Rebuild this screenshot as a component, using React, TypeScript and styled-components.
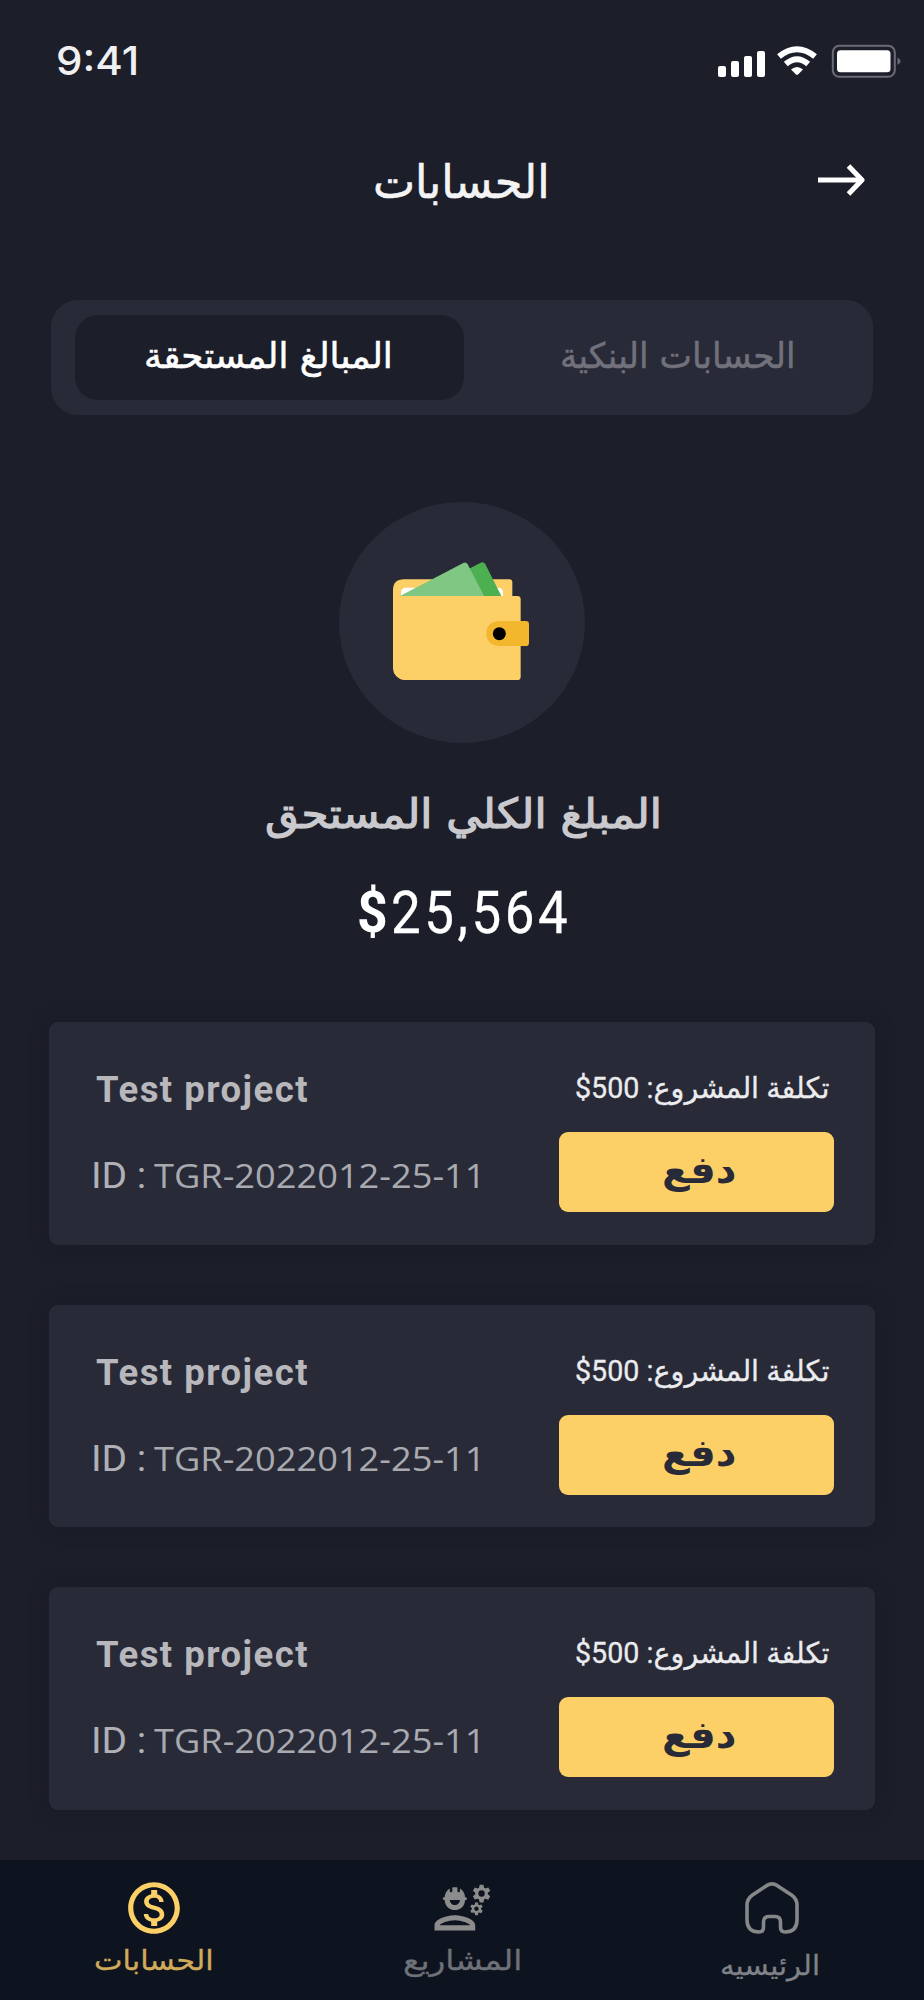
import React, { useLayoutEffect, useRef, useState } from "react";
import styled, { createGlobalStyle } from "styled-components";
import { MdOutlineEngineering, MdOutlineMonetizationOn } from "react-icons/md";

const arabic = '"DejaVu Sans", sans-serif';
const latin = 'Roboto, "Liberation Sans", sans-serif';

const GlobalStyle = createGlobalStyle`
  * { box-sizing: border-box; }
  body { margin: 0; background: #1c1e2a; }
`;

const Screen = styled.div`
  width: 924px;
  height: 2000px;
  display: flex;
  flex-direction: column;
  background: #1c1e2a;
  color: #fff;
  font-family: ${arabic};
  overflow: hidden;
`;

type FitStyle = {
  $w: number;
  $size: number;
  $weight?: number;
  $color?: string;
  $font?: string;
  $stroke?: number;
  $spacing?: number;
};

const FitBox = styled.span<FitStyle>`
  display: flex;
  flex: none;
  width: ${(p) => p.$w}px;
  height: 40px;
  line-height: 40px;
  font-family: ${(p) => p.$font ?? arabic};
  font-size: ${(p) => p.$size}px;
  font-weight: ${(p) => p.$weight ?? 400};
  color: ${(p) => p.$color ?? "#fff"};
  letter-spacing: ${(p) => (p.$spacing ? `${p.$spacing}px` : "normal")};
  -webkit-text-stroke: ${(p) => p.$stroke ?? 0}px currentColor;
`;

const FitInner = styled.span`
  flex: none;
  white-space: nowrap;
  transform-origin: 0 50%;
`;

type FitProps = {
  width: number;
  size: number;
  weight?: number;
  color?: string;
  font?: string;
  stroke?: number;
  spacing?: number;
  rtl?: boolean;
  children: React.ReactNode;
};

/* A single line of text condensed or widened to an exact width. */
function Fit({ width, size, weight, color, font, stroke, spacing, rtl, children }: FitProps) {
  const ref = useRef<HTMLSpanElement>(null);
  const [scale, setScale] = useState(1);
  useLayoutEffect(() => {
    if (ref.current) setScale(width / ref.current.offsetWidth);
  }, [width, size]);
  return (
    <FitBox
      $w={width}
      $size={size}
      $weight={weight}
      $color={color}
      $font={font}
      $stroke={stroke}
      $spacing={spacing}
    >
      <FitInner ref={ref} dir={rtl ? "rtl" : "ltr"} style={{ transform: `scaleX(${scale})` }}>
        {children}
      </FitInner>
    </FitBox>
  );
}

const StatusBar = styled.header`
  height: 122px;
  flex: none;
  display: flex;
  align-items: center;
  justify-content: space-between;
  padding: 0 23px 0 56px;
`;

const TitleBar = styled.div`
  height: 120px;
  flex: none;
  display: grid;
  grid-template-columns: 1fr auto 1fr;
  align-items: center;
  padding: 0 59px 0 57px;
`;

const BackButton = styled.button`
  grid-column: 3;
  justify-self: end;
  display: flex;
  padding: 0 0 4px;
  border: 0;
  background: none;
`;

const TitleSlot = styled.h1`
  grid-column: 2;
  margin: 0;
`;

const Tabs = styled.div`
  flex: none;
  display: flex;
  height: 115px;
  margin: 58px 51px 0;
  padding: 15px 24px;
  border-radius: 27px;
  background: #282a38;
`;

const Tab = styled.button<{ $active?: boolean }>`
  display: flex;
  align-items: center;
  justify-content: center;
  flex: ${(p) => (p.$active ? "0 0 389px" : "1")};
  padding: ${(p) => (p.$active ? "0 2px 3px 0" : "0 0 3px 42px")};
  border: 0;
  border-radius: 23px;
  background: ${(p) => (p.$active ? "#1c1e2a" : "transparent")};
`;

const WalletDisc = styled.div`
  flex: none;
  align-self: center;
  display: flex;
  align-items: center;
  justify-content: center;
  width: 246px;
  height: 241px;
  margin-top: 87px;
  padding: 0 2px 4px 0;
  border-radius: 50%;
  background: #282a38;
`;

const Summary = styled.section`
  flex: none;
  display: flex;
  flex-direction: column;
  align-items: center;
  margin-top: 51px;
  padding-left: 2px;
  gap: 59px;
`;

const Amount = styled.div`
  display: flex;
  gap: 3px;
  padding-left: 1px;
`;

const CardList = styled.main`
  flex: 1;
  display: flex;
  flex-direction: column;
  gap: 60px;
  padding: 89px 49px 0;
`;

const Card = styled.article`
  display: flex;
  flex: none;
  justify-content: space-between;
  height: 222.5px;
  padding: 0 41px 0 42px;
  border-radius: 9px;
  background: #282a38;
  box-shadow: 0 0 20px rgba(20, 20, 26, 0.25);
`;

const ProjectInfo = styled.div`
  display: flex;
  flex-direction: column;
  gap: 45px;
  padding-top: 48px;
`;

const ProjectName = styled.div`
  padding-left: 5px;
`;

const ProjectId = styled.div`
  display: flex;
  gap: 8px;
`;

const Payment = styled.div`
  width: 275px;
  display: flex;
  flex-direction: column;
  align-items: flex-end;
  padding-top: 46px;
  gap: 24px;
`;

const Cost = styled.div`
  padding-right: 5px;
`;

const PayButton = styled.button`
  width: 275px;
  height: 80px;
  display: flex;
  align-items: center;
  justify-content: center;
  padding: 0 0 4px 4px;
  border: 0;
  border-radius: 9px;
  background: #fdcf67;
`;

const NavBar = styled.nav`
  flex: none;
  display: grid;
  grid-template-columns: repeat(3, 1fr);
  height: 140px;
  background: #0e141f;
`;

const NavItem = styled.a<{ $gap: number; $color: string }>`
  display: flex;
  flex-direction: column;
  align-items: center;
  gap: ${(p) => p.$gap}px;
  padding-top: 17px;
  color: ${(p) => p.$color};
`;

const IconSlot = styled.span<{ $inset?: number }>`
  display: flex;
  align-items: center;
  justify-content: center;
  height: 61px;
  padding-left: ${(p) => p.$inset ?? 0}px;
`;

function StatusIcons() {
  return (
    <svg width="184" height="34" viewBox="0 0 184 34" fill="#fff">
      <rect x="1" y="22" width="8" height="11" rx="2" />
      <rect x="14" y="17" width="8" height="16" rx="2" />
      <rect x="27" y="12" width="8" height="21" rx="2" />
      <rect x="40" y="7" width="8" height="26" rx="2" />
      <g fill="none" stroke="#fff" strokeWidth="6">
        <path d="M62 12.5 Q80 -2 98 12.5" />
        <path d="M68.8 20 Q80 10.5 91.2 20" />
      </g>
      <path d="M74 25.5 Q80 20.5 86 25.5 L81 30.5 Q80 31.3 79 30.5 Z" />
      <rect x="115.800" y="1.800" width="62" height="31" rx="6.500" fill="none" stroke="#6a6b75" strokeWidth="2" />
      <rect x="120" y="6.300" width="53.500" height="22" rx="3.500" />
      <path d="M180.5 13.5 Q183.5 15 183.5 17.3 Q183.5 19.5 180.5 21 Z" fill="#6a6b75" />
    </svg>
  );
}

function ArrowRight() {
  return (
    <svg width="48" height="32" viewBox="0 0 48 32" fill="none" stroke="#fff" strokeWidth="5">
      <path d="M1 16 H45" />
      <path d="M31.500 2 L45 16 L31.500 30" strokeLinejoin="round" />
    </svg>
  );
}

function Wallet() {
  return (
    <svg width="142" height="122" viewBox="210 210 426 366">
      <path d="M252 268 H568 Q577 268 577 277 V330 H219 V301 Q219 268 252 268 Z" fill="#fdcf67" />
      <rect x="243" y="293" width="306" height="40" rx="14" fill="#fff" />
      <path d="M440 240 L482 218 Q491 214 496 223 L546 322 H470 Z" fill="#4caf50" />
      <path d="M240 318 L430 219 Q438 215 443 223 L494 322 H240 Z" fill="#81c784" />
      <path d="M219 300 Q222 318 250 318 H592 Q602 318 602 328 V560 Q602 570 592 570 H252 Q240 570 229 559 Q219 548 219 536 Z" fill="#fdcf67" />
      <path d="M537 393 H617 Q627 393 627 403 V458 Q627 468 617 468 H537 Q499 464 499 430.500 Q499 397 537 393 Z" fill="#f2b72d" />
      <circle cx="538" cy="431" r="19.500" fill="#000" />
    </svg>
  );
}

function HomeIcon() {
  return (
    <svg width="54" height="52" viewBox="0 0 54 52" fill="none" stroke="#868789" strokeWidth="3.600" strokeLinejoin="round">
      <path d="M22 3.400 Q27 0.300 32 3.400 L46.500 13 Q52 17 52 23 V38 Q52 50 40 50 Q35.500 50 35.500 45 V40 Q35.500 34.500 30 34.500 H24 Q18.500 34.500 18.500 40 V45 Q18.500 50 14 50 Q2 50 2 38 V23 Q2 17 7.500 13 Z" />
    </svg>
  );
}

function ProjectCard() {
  return (
    <Card>
      <ProjectInfo>
        <ProjectName>
          <Fit width={213} size={37} weight={700} color="#b7b7bc" font={latin} spacing={1.5}>Test project</Fit>
        </ProjectName>
        <ProjectId>
          <Fit width={55} size={37.5} color="#b0b0b6" font={latin}>ID :</Fit>
          <Fit width={332} size={33.5} color="#a9aab0" font={'"Open Sans", sans-serif'}>TGR-2022012-25-11</Fit>
        </ProjectId>
      </ProjectInfo>
      <Payment>
        <Cost>
          <Fit width={254} size={29} rtl color="#ececef" stroke={0.3} font={`Roboto, ${arabic}`}>
            تكلفة المشروع: <bdi dir="ltr">$500</bdi>
          </Fit>
        </Cost>
        <PayButton>
          <Fit width={74} size={38} weight={700} rtl color="#282a38">دفع</Fit>
        </PayButton>
      </Payment>
    </Card>
  );
}

export default function App() {
  return (
    <>
      <GlobalStyle />
      <Screen>
        <StatusBar>
          <Fit width={83} size={40} weight={500} color="#f0f0f2" font="Inter, sans-serif">9:41</Fit>
          <StatusIcons />
        </StatusBar>
        <TitleBar>
          <TitleSlot>
            <Fit width={177} size={46} rtl stroke={0.6} color="#f4f4f5">الحسابات</Fit>
          </TitleSlot>
          <BackButton aria-label="رجوع">
            <ArrowRight />
          </BackButton>
        </TitleBar>
        <Tabs>
          <Tab $active>
            <Fit width={249} size={35} rtl stroke={0.6}>المبالغ المستحقة</Fit>
          </Tab>
          <Tab>
            <Fit width={236} size={35} rtl stroke={0.5} color="#70717b">الحسابات البنكية</Fit>
          </Tab>
        </Tabs>
        <WalletDisc>
          <Wallet />
        </WalletDisc>
        <Summary>
          <Fit width={397} size={41} rtl stroke={1.2} color="#cacace">المبلغ الكلي المستحق</Fit>
          <Amount>
            <Fit width={31} size={57} weight={700} font={latin}>$</Fit>
            <Fit width={180} size={59} font={latin} spacing={4} stroke={0.3}>25,564</Fit>
          </Amount>
        </Summary>
        <CardList>
          <ProjectCard />
          <ProjectCard />
          <ProjectCard />
        </CardList>
        <NavBar>
          <NavItem $gap={3} $color="#fdcf67">
            <IconSlot><MdOutlineMonetizationOn size={62} /></IconSlot>
            <Fit width={120} size={28} rtl stroke={0.3} color="#d0ab5b">الحسابات</Fit>
          </NavItem>
          <NavItem $gap={3} $color="#8c8c8c">
            <IconSlot><MdOutlineEngineering size={61} /></IconSlot>
            <Fit width={119} size={28} rtl stroke={0.3} color="#6e7177">المشاريع</Fit>
          </NavItem>
          <NavItem $gap={8} $color="#898989">
            <IconSlot $inset={4}><HomeIcon /></IconSlot>
            <Fit width={100} size={27} rtl stroke={0.3} color="#808287">الرئيسيه</Fit>
          </NavItem>
        </NavBar>
      </Screen>
    </>
  );
}
